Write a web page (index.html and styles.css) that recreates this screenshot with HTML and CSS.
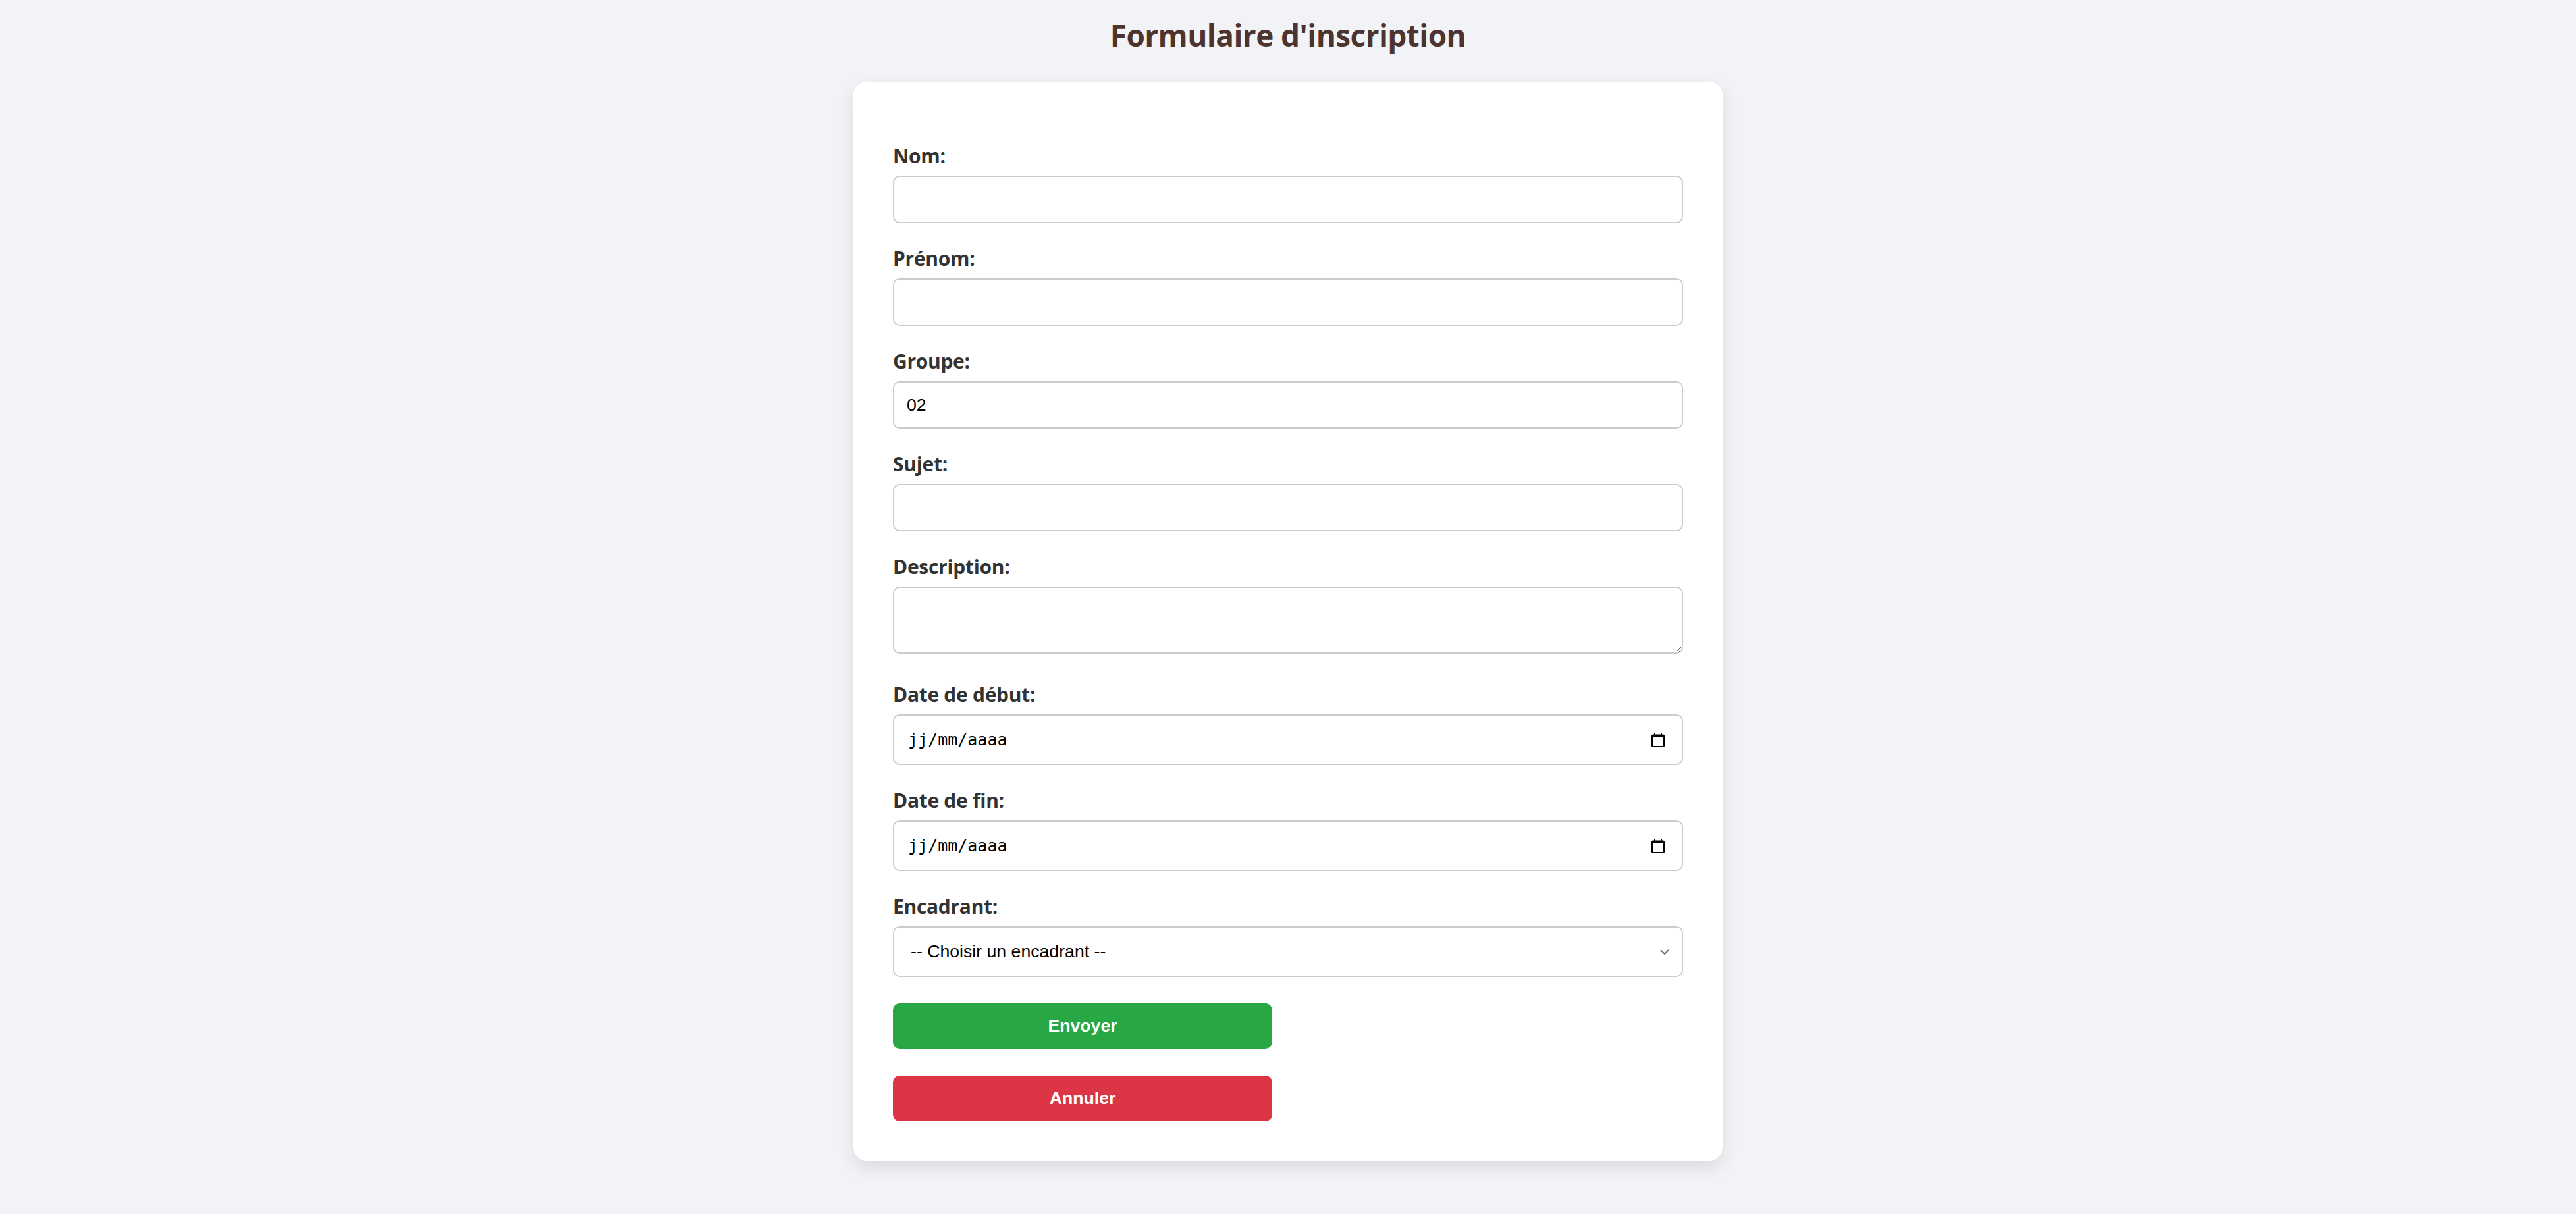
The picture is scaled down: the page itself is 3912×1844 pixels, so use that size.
FILE: index.html
```html
<!DOCTYPE html>
<html lang="fr">
<head>
<meta charset="utf-8">
<title>Formulaire d'inscription</title>
<link rel="stylesheet" href="styles.css">
</head>
<body>
<h1 class="title">Formulaire d'inscription</h1>
<form class="card">
  <label class="label" for="nom">Nom:</label>
  <input class="field" id="nom" type="text">

  <label class="label" for="prenom">Prénom:</label>
  <input class="field" id="prenom" type="text">

  <label class="label" for="groupe">Groupe:</label>
  <input class="field" id="groupe" type="text" value="02">

  <label class="label" for="sujet">Sujet:</label>
  <input class="field" id="sujet" type="text">

  <label class="label" for="desc">Description:</label>
  <textarea class="field area" id="desc"></textarea>

  <label class="label">Date de début:</label>
  <div class="field date">
    <span class="date-text">jj/mm/aaaa</span>
    <svg class="cal" width="20" height="22" viewBox="0 0 20 22" aria-hidden="true">
      <rect x="1" y="3.5" width="18" height="17.5" rx="1.5" fill="none" stroke="#000" stroke-width="2"/>
      <rect x="1" y="3" width="18" height="4" fill="#000"/>
      <rect x="4" y="0.5" width="2" height="3" fill="#000"/>
      <rect x="14" y="0.5" width="2" height="3" fill="#000"/>
    </svg>
  </div>

  <label class="label">Date de fin:</label>
  <div class="field date">
    <span class="date-text">jj/mm/aaaa</span>
    <svg class="cal" width="20" height="22" viewBox="0 0 20 22" aria-hidden="true">
      <rect x="1" y="3.5" width="18" height="17.5" rx="1.5" fill="none" stroke="#000" stroke-width="2"/>
      <rect x="1" y="3" width="18" height="4" fill="#000"/>
      <rect x="4" y="0.5" width="2" height="3" fill="#000"/>
      <rect x="14" y="0.5" width="2" height="3" fill="#000"/>
    </svg>
  </div>

  <label class="label">Encadrant:</label>
  <div class="field select">
    <span class="select-text">-- Choisir un encadrant --</span>
    <svg class="chev" width="16" height="10" viewBox="0 0 16 10" aria-hidden="true">
      <path d="M2 2 L8 8 L14 2" fill="none" stroke="#666" stroke-width="1.8"/>
    </svg>
  </div>

  <button class="btn btn-send" type="button">Envoyer</button>
  <button class="btn btn-cancel" type="button">Annuler</button>
</form>
</body>
</html>
```

FILE: styles.css
```css
html, body {
  margin: 0;
  padding: 0;
}

body {
  background: #f2f3f7;
  font-family: "Segoe UI", "Open Sans", "Noto Sans", sans-serif;
  min-height: 1844px;
}

.title {
  margin: 23px 0 41px;
  font-size: 46px;
  line-height: 60px;
  letter-spacing: -0.6px;
  font-weight: 700;
  text-align: center;
  color: #4e342e;
}

.card {
  box-sizing: border-box;
  width: 1320px;
  margin: 0 auto;
  padding: 93px 60px 60px;
  background: #ffffff;
  border-radius: 20px;
  box-shadow: 0 10px 26px rgba(0, 0, 0, 0.10);
  display: flex;
  flex-direction: column;
  align-items: flex-start;
}

.label {
  display: block;
  font-size: 30px;
  line-height: 40px;
  letter-spacing: -0.3px;
  font-weight: 700;
  color: #333333;
  margin-bottom: 10px;
}

.field {
  box-sizing: border-box;
  display: block;
  width: 100%;
  height: 72px;
  margin: 0 0 34px;
  padding: 0 19px;
  border: 2px solid #cccccc;
  border-radius: 10px;
  background: #ffffff;
  font-family: "Liberation Sans", Arial, sans-serif;
  font-size: 26.67px;
  color: #000000;
  outline: none;
}

.area {
  height: 102px;
  margin-bottom: 42px;
  padding: 10px 19px;
  resize: vertical;
}

.date {
  height: 77px;
  display: flex;
  align-items: center;
  justify-content: space-between;
  padding: 0 26px 0 21px;
}

.date-text {
  font-family: "DejaVu Sans Mono", "Liberation Mono", monospace;
  font-size: 25px;
  color: #000000;
}

.cal {
  display: block;
}

.select {
  height: 77px;
  margin-bottom: 40px;
  display: flex;
  align-items: center;
  justify-content: space-between;
  padding: 0 18px 0 25px;
}

.select-text {
  white-space: nowrap;
}

.chev {
  display: block;
}

.btn {
  display: block;
  width: 576px;
  height: 69px;
  border: none;
  border-radius: 10px;
  color: #ffffff;
  font-family: "Liberation Sans", Arial, sans-serif;
  font-size: 26.67px;
  font-weight: 700;
  cursor: pointer;
}

.btn-send {
  background: #28a745;
  margin-bottom: 41px;
}

.btn-cancel {
  background: #dc3545;
}
```
